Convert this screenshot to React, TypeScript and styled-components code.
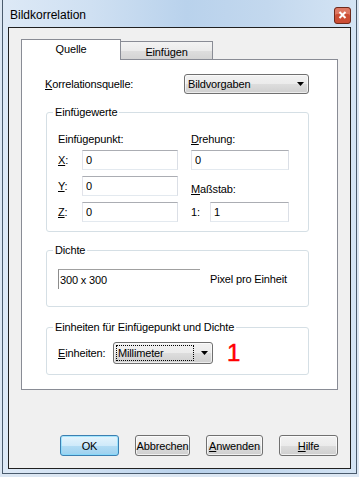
import styled, { createGlobalStyle } from "styled-components";

const GlobalStyle = createGlobalStyle`
  html, body {
    margin: 0;
    padding: 0;
  }
  body {
    width: 359px;
    height: 477px;
    overflow: hidden;
    background: #dce7f3;
    font-family: "Liberation Sans", Arial, sans-serif;
    font-size: 11px;
    letter-spacing: -0.15px;
    color: #000;
  }
  * {
    box-sizing: border-box;
  }
`;

export default function App() {
  return (
    <>
      <GlobalStyle />
      <Window>
        <TitleBar>
          <Title>Bildkorrelation</Title>
          <CloseButton aria-label="Schließen">
            <svg width="9" height="8" viewBox="0 0 9 8">
              <path d="M1.5 1 L7.5 7 M7.5 1 L1.5 7" stroke="#ffffff" strokeWidth="2" />
            </svg>
          </CloseButton>
        </TitleBar>

        <Client>
          <TabStrip>
            <Tab $active>Quelle</Tab>
            <Tab>Einfügen</Tab>
          </TabStrip>

          <Panel>
            <SourceRow>
              <span>
                <U>K</U>orrelationsquelle:
              </span>
              <Combo $w={125} $h={20}>
                <ComboText>Bildvorgaben</ComboText>
                <Arrow />
              </Combo>
            </SourceRow>

            <Group $mt={12} $pt={14} $pb={9}>
              <Legend>Einfügewerte</Legend>
              <Columns>
                <Column>
                  <ColTitle>Einfügepunkt:</ColTitle>
                  <FieldList>
                    <FieldRow>
                      <FieldLabel $w={24}>
                        <U>X</U>:
                      </FieldLabel>
                      <TextBox $w={96} defaultValue="0" readOnly />
                    </FieldRow>
                    <FieldRow>
                      <FieldLabel $w={24}>
                        <U>Y</U>:
                      </FieldLabel>
                      <TextBox $w={96} defaultValue="0" readOnly />
                    </FieldRow>
                    <FieldRow>
                      <FieldLabel $w={24}>
                        <U>Z</U>:
                      </FieldLabel>
                      <TextBox $w={96} defaultValue="0" readOnly />
                    </FieldRow>
                  </FieldList>
                </Column>

                <Column>
                  <ColTitle>
                    <U>D</U>rehung:
                  </ColTitle>
                  <TextBox $w={98} defaultValue="0" readOnly />
                  <ColTitle $mt={13} $mb={6}>
                    <U>M</U>aßstab:
                  </ColTitle>
                  <FieldRow>
                    <FieldLabel $w={19}>1:</FieldLabel>
                    <TextBox $w={79} defaultValue="1" readOnly />
                  </FieldRow>
                </Column>
              </Columns>
            </Group>

            <Group $mt={12} $pt={12} $pb={17}>
              <Legend>Dichte</Legend>
              <FieldRow>
                <DensityField>300 x 300</DensityField>
                <Unit>Pixel pro Einheit</Unit>
              </FieldRow>
            </Group>

            <Group $mt={14} $pt={8} $pb={10}>
              <Legend>Einheiten für Einfügepunkt und Dichte</Legend>
              <FieldRow>
                <FieldLabel $w={55}>
                  <U>E</U>inheiten:
                </FieldLabel>
                <Combo $w={100} $h={22}>
                  <FocusText>Millimeter</FocusText>
                  <Arrow />
                </Combo>
                <Marker>1</Marker>
              </FieldRow>
            </Group>
          </Panel>

          <ButtonRow>
            <Button $w={59} $default>
              OK
            </Button>
            <Button $w={55}>Abbrechen</Button>
            <Button $w={57}>
              <U>A</U>nwenden
            </Button>
            <Button $w={59}>
              <U>H</U>ilfe
            </Button>
          </ButtonRow>
        </Client>
      </Window>
    </>
  );
}

function Arrow() {
  return (
    <ArrowIcon width="7" height="4" viewBox="0 0 7 4">
      <polygon points="0,0 7,0 3.5,4" fill="#000" />
    </ArrowIcon>
  );
}

const Window = styled.div`
  margin: 0 2px;
  height: 474px;
  display: flex;
  flex-direction: column;
  padding: 0 5px 4px;
  border: 1px solid #4a5b6d;
  border-top: none;
  background: linear-gradient(
    to right,
    #dde9f6 0%,
    #cfe0f2 25%,
    #b9d2ec 52%,
    #c3d8ee 75%,
    #d4e4f4 100%
  );
`;

const TitleBar = styled.div`
  height: 27px;
  padding: 3px 0 0 2px;
  display: flex;
  align-items: center;
  justify-content: space-between;
`;

const Title = styled.div`
  font-size: 12px;
  letter-spacing: 0;
  color: #000;
`;

const CloseButton = styled.div`
  width: 17px;
  height: 17px;
  flex: none;
  display: flex;
  align-items: center;
  justify-content: center;
  border: 1px solid #6e2a1c;
  border-radius: 3px;
  background: #cc4e35;
  box-shadow: inset 0 6px 0 rgba(255, 200, 185, 0.35);
`;

const Client = styled.div`
  flex: 1;
  display: flex;
  flex-direction: column;
  padding: 11px 12px 12px;
  border: 1px solid #202020;
  background: #f0f0f0;
`;

const TabStrip = styled.div`
  height: 21px;
  display: flex;
  align-items: flex-end;
  margin-bottom: -1px;
  position: relative;
  z-index: 1;
`;

const Tab = styled.div<{ $active?: boolean }>`
  display: flex;
  align-items: center;
  justify-content: center;
  border: 1px solid #898c95;
  border-bottom: none;
  width: ${(p) => (p.$active ? 100 : 92)}px;
  height: ${(p) => (p.$active ? 21 : 18)}px;
  margin-bottom: ${(p) => (p.$active ? 0 : 1)}px;
  padding: ${(p) => (p.$active ? "0 0 3px" : "2px 0 0")};
  ${(p) => !p.$active && "border-left: none;"}
  background: ${(p) =>
    p.$active
      ? "#ffffff"
      : "linear-gradient(#f3f3f3 0%, #ebebeb 50%, #dedede 51%, #d4d4d4 100%)"};
`;

const Panel = styled.div`
  height: 331px;
  display: flex;
  flex-direction: column;
  padding: 14px 28px 0 24px;
  border: 1px solid #898c95;
  background: #ffffff;
`;

const SourceRow = styled.div`
  display: flex;
  align-items: center;
  justify-content: space-between;
  height: 20px;
  margin-left: -1px;
`;

const U = styled.span`
  text-decoration: underline;
  text-underline-offset: 1px;
`;

const Combo = styled.div<{ $w: number; $h: number }>`
  width: ${(p) => p.$w}px;
  height: ${(p) => p.$h}px;
  display: flex;
  align-items: center;
  justify-content: space-between;
  padding: 0 4px 0 2px;
  border: 1px solid #707070;
  border-radius: 3px;
  background: linear-gradient(#f2f2f2 0%, #ebebeb 50%, #dddddd 51%, #cfcfcf 100%);
  box-shadow: inset 0 0 0 1px rgba(255, 255, 255, 0.6);
`;

const ComboText = styled.span`
  padding-left: 1px;
`;

const FocusText = styled.span`
  width: 78px;
  height: 16px;
  display: flex;
  align-items: center;
  padding-left: 1px;
  border: 1px dotted #000;
`;

const ArrowIcon = styled.svg`
  flex: none;
`;

const Group = styled.fieldset<{ $mt: number; $pt: number; $pb: number }>`
  margin: ${(p) => p.$mt}px 0 0;
  min-width: 0;
  width: 263px;
  padding: ${(p) => p.$pt}px 11px ${(p) => p.$pb}px;
  border: 1px solid #d5dfe5;
  border-radius: 3px;
`;

const Legend = styled.legend`
  padding: 0 2px;
  margin-left: -5px;
  line-height: 13px;
`;

const Columns = styled.div`
  display: flex;
  gap: 13px;
`;

const Column = styled.div`
  display: flex;
  flex-direction: column;
`;

const ColTitle = styled.div<{ $mt?: number; $mb?: number }>`
  line-height: 13px;
  margin-top: ${(p) => p.$mt ?? 0}px;
  margin-bottom: ${(p) => p.$mb ?? 4}px;
`;

const FieldList = styled.div`
  display: flex;
  flex-direction: column;
  gap: 6px;
`;

const FieldRow = styled.div`
  display: flex;
  align-items: center;
`;

const FieldLabel = styled.span<{ $w: number }>`
  width: ${(p) => p.$w}px;
  flex: none;
`;

const TextBox = styled.input<{ $w: number }>`
  width: ${(p) => p.$w}px;
  height: 20px;
  padding: 0 0 0 3px;
  margin: 0;
  font: inherit;
  letter-spacing: inherit;
  color: #000;
  background: #fff;
  border: 1px solid;
  border-color: #abadb3 #dbdfe6 #e3e9ef #e2e3ea;
  outline: none;
`;

const DensityField = styled.div`
  width: 142px;
  height: 20px;
  display: flex;
  align-items: center;
  padding-left: 1px;
  border-top: 1px solid #a0a0a0;
  border-left: 1px solid #8c8c8c;
`;

const Unit = styled.span`
  margin-left: 10px;
`;

const Marker = styled.span`
  margin-left: 14px;
  font-size: 24px;
  line-height: 22px;
  letter-spacing: 0;
  color: #ff0000;
  -webkit-text-stroke: 0.5px #ff0000;
`;

const ButtonRow = styled.div`
  margin-top: auto;
  display: flex;
  justify-content: flex-end;
  gap: 16px;
`;

const Button = styled.div<{ $w: number; $default?: boolean }>`
  width: ${(p) => p.$w}px;
  height: 21px;
  display: flex;
  align-items: center;
  justify-content: center;
  border: 1px solid ${(p) => (p.$default ? "#3c7fb1" : "#707070")};
  border-radius: 3px;
  background: ${(p) =>
    p.$default
      ? "linear-gradient(#e5f4fc 0%, #cfeafa 50%, #b2dcf4 51%, #9dd1ef 100%)"
      : "linear-gradient(#f2f2f2 0%, #ebebeb 50%, #dddddd 51%, #cfcfcf 100%)"};
  box-shadow: inset 0 0 0 1px
    ${(p) => (p.$default ? "rgba(120, 220, 255, 0.6)" : "rgba(255, 255, 255, 0.7)")};
`;
